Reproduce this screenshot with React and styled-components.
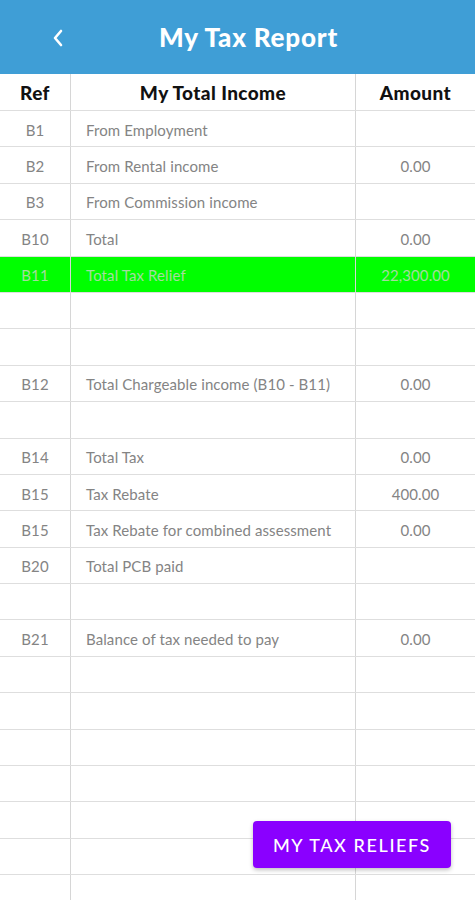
import React from 'react';
import styled, { createGlobalStyle } from 'styled-components';

const GlobalStyle = createGlobalStyle`
  html, body {
    margin: 0;
    padding: 0;
    background: #fff;
    font-family: Lato, "Noto Sans", sans-serif;
  }
  * { box-sizing: border-box; }
`;

const Screen = styled.div`
  position: relative;
  width: 475px;
  height: 900px;
  overflow: hidden;
  background: #fff;
`;

const TopBar = styled.div`
  height: 74px;
  background: #3f9ed6;
  display: flex;
  align-items: center;
  justify-content: center;
  position: relative;
`;

const BackButton = styled.button`
  position: absolute;
  left: 46px;
  top: 26px;
  width: 24px;
  height: 24px;
  padding: 0;
  border: none;
  background: transparent;
  display: flex;
  align-items: center;
  justify-content: center;
`;

const Title = styled.h1`
  margin: 0 0 0 22px;
  color: #fff;
  font-size: 26px;
  font-weight: 900;
  letter-spacing: 0.8px;
`;

const Table = styled.div`
  display: flex;
  flex-direction: column;
`;

const Row = styled.div`
  display: grid;
  grid-template-columns: 71px 285px 119px;
  height: ${p => (p.head ? '37px' : '36.4px')};
  background: ${p => (p.highlight ? '#00ff00' : '#fff')};
  border-bottom: 1.5px solid #dedede;
`;

const Cell = styled.div`
  display: flex;
  align-items: center;
  justify-content: ${p => (p.left ? 'flex-start' : 'center')};
  padding-left: ${p => (p.left ? '15px' : '0')};
  padding-top: ${p => (p.head ? '0' : '2px')};
  border-right: ${p => (p.last ? 'none' : '1.5px solid #d6d6d6')};
  font-size: ${p => (p.head ? '19px' : '15px')};
  font-weight: ${p => (p.head ? 900 : 400)};
  letter-spacing: ${p => (p.head ? '0.4px' : '0.1px')};
  color: ${p => (p.head ? '#111' : p.faint ? '#a4dc9f' : '#848484')};
  white-space: nowrap;
`;

const FloatButton = styled.button`
  position: absolute;
  left: 253px;
  top: 821px;
  width: 198px;
  height: 47px;
  border: none;
  border-radius: 4px;
  background: #8a00ff;
  color: #fff;
  font-family: Lato, "Noto Sans", sans-serif;
  font-size: 18px;
  font-weight: 500;
  letter-spacing: 1.6px;
  box-shadow: 0 2px 4px rgba(0, 0, 0, 0.25);
`;

const rows = [
  ['B1', 'From Employment', ''],
  ['B2', 'From Rental income', '0.00'],
  ['B3', 'From Commission income', ''],
  ['B10', 'Total', '0.00'],
  ['B11', 'Total Tax Relief', '22,300.00', true],
  ['', '', ''],
  ['', '', ''],
  ['B12', 'Total Chargeable income (B10 - B11)', '0.00'],
  ['', '', ''],
  ['B14', 'Total Tax', '0.00'],
  ['B15', 'Tax Rebate', '400.00'],
  ['B15', 'Tax Rebate for combined assessment', '0.00'],
  ['B20', 'Total PCB paid', ''],
  ['', '', ''],
  ['B21', 'Balance of tax needed to pay', '0.00'],
  ['', '', ''],
  ['', '', ''],
  ['', '', ''],
  ['', '', ''],
  ['', '', ''],
  ['', '', ''],
  ['', '', ''],
];

export default function App() {
  return (
    <Screen>
      <GlobalStyle />
      <TopBar>
        <BackButton aria-label="Back">
          <svg width="14" height="20" viewBox="0 0 14 20">
            <path d="M10 3 L4 10 L10 17" fill="none" stroke="#fff" strokeWidth="2.6" strokeLinecap="round" strokeLinejoin="round" />
          </svg>
        </BackButton>
        <Title>My Tax Report</Title>
      </TopBar>
      <Table>
        <Row head>
          <Cell head>Ref</Cell>
          <Cell head>My Total Income</Cell>
          <Cell head last>Amount</Cell>
        </Row>
        {rows.map(([ref, label, amount, hl], i) => (
          <Row key={i} highlight={hl}>
            <Cell faint={hl}>{ref}</Cell>
            <Cell left faint={hl}>{label}</Cell>
            <Cell last faint={hl}>{amount}</Cell>
          </Row>
        ))}
      </Table>
      <FloatButton>MY TAX RELIEFS</FloatButton>
    </Screen>
  );
}
